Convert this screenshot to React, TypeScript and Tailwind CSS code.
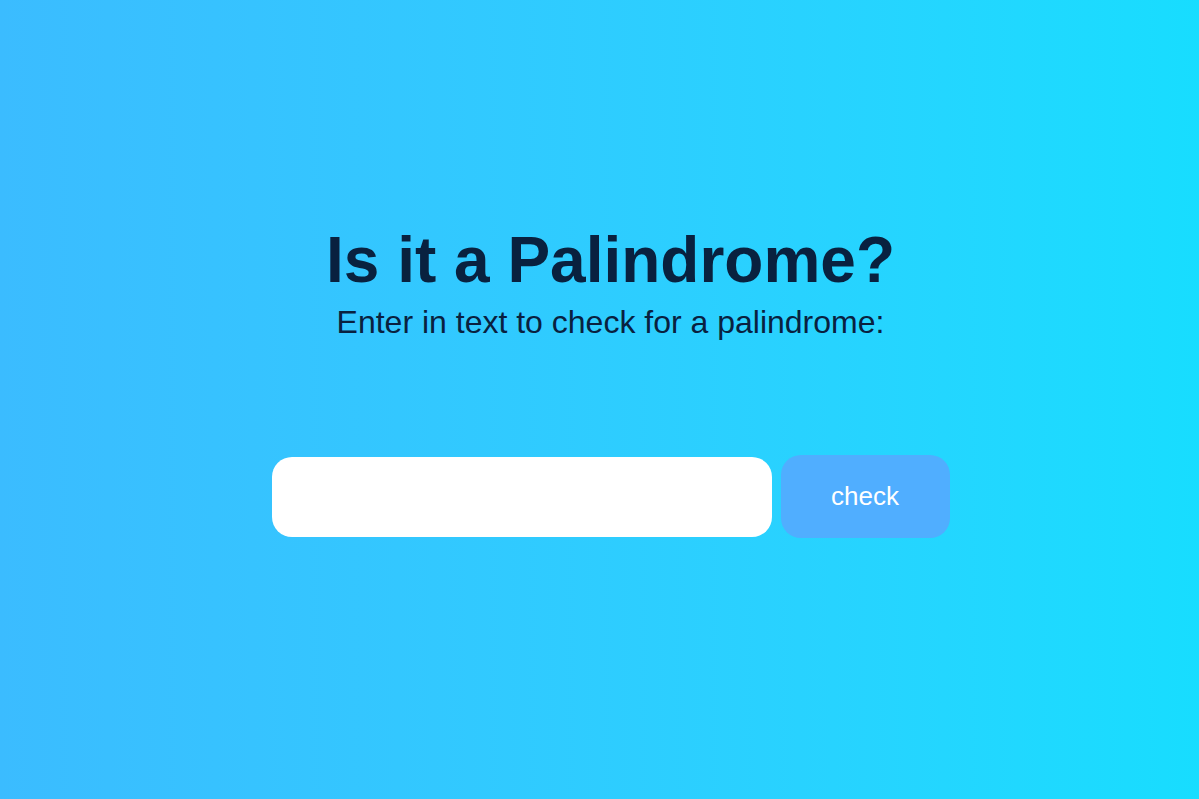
export default function App() {
  return (
    <main className="w-full h-[799px] pl-[22px] flex flex-col items-center bg-gradient-to-r from-[#3bbcff] to-[#17ddff] font-['Liberation_Sans',Arial,sans-serif] text-[#09213f]">
      <h1 className="mt-[216px] text-[64px] leading-[88px] font-bold">Is it a Palindrome?</h1>
      <p className="text-[32px] leading-[36px]">Enter in text to check for a palindrome:</p>
      <div className="mt-[115px] flex items-center gap-[9px]">
        <input
          type="text"
          className="w-[500px] h-[80px] rounded-[20px] bg-white outline-none px-4 text-2xl"
        />
        <button className="w-[169px] h-[83px] rounded-[20px] bg-[#50aeff] text-white text-[26px]">
          check
        </button>
      </div>
    </main>
  );
}
